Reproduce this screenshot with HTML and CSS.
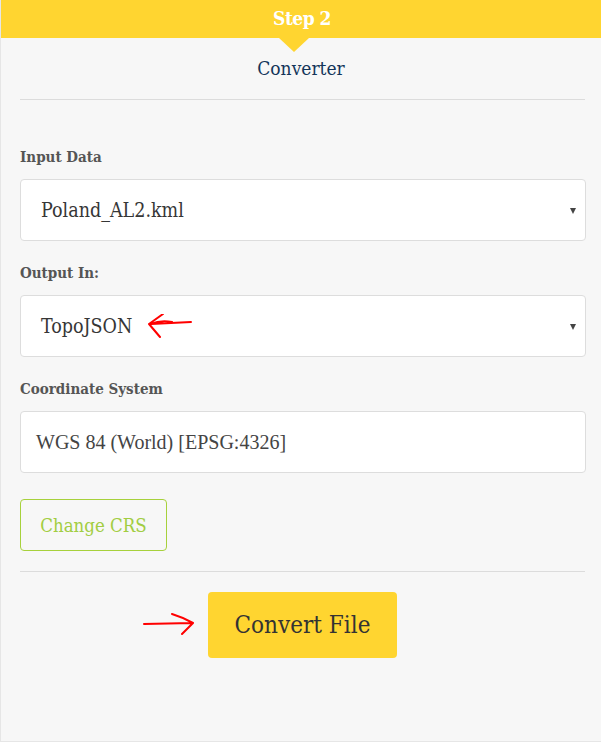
FILE: index.html
```html
<!DOCTYPE html>
<html>
<head>
<meta charset="utf-8">
<link rel="stylesheet" href="styles.css">
</head>
<body>
<div class="panel">
  <div class="bar"><span class="step">Step 2</span></div>
  <div class="title">Converter</div>
  <div class="rule"></div>
  <div class="form">
    <div class="label first">Input Data</div>
    <div class="select">
      <span class="value">Poland_AL2.kml</span>
      <span class="caret"></span>
    </div>
    <div class="label">Output In:</div>
    <div class="select">
      <span class="value">TopoJSON</span>
      <svg class="mark-left" width="50" height="30" viewBox="0 0 50 30">
        <path d="M45 8 L5 10 M17 0 L3 10 L14 23 M5 10 Q14 6 26 8" fill="none" stroke="#f00" stroke-width="2" stroke-linecap="round" stroke-linejoin="round"/>
      </svg>
      <span class="caret"></span>
    </div>
    <div class="label">Coordinate System</div>
    <div class="input">WGS 84 (World) [EPSG:4326]</div>
    <div class="crs-row"><button class="crs">Change CRS</button></div>
  </div>
  <div class="rule bottom"></div>
  <div class="convert-row">
    <svg class="mark-right" width="56" height="26" viewBox="0 0 56 26">
      <path d="M2 11 L50 10 M30 1 Q40 4 51 10 Q46 15 40 21" fill="none" stroke="#f00" stroke-width="2" stroke-linecap="round" stroke-linejoin="round"/>
    </svg>
    <button class="convert">Convert File</button>
  </div>
</div>
</body>
</html>
```
FILE: styles.css
```css
html, body {
  margin: 0;
  padding: 0;
  background: #ffffff;
}
.panel {
  width: 600px;
  height: 741px;
  background: #f7f7f7;
  border-left: 1px solid #e6e6e6;
  border-bottom: 1px solid #e6e6e6;
  font-family: "DejaVu Serif Condensed", "DejaVu Serif", serif;
}
.bar {
  position: relative;
  height: 38px;
  background: #ffd530;
  display: flex;
  justify-content: center;
  align-items: center;
}
.bar::after {
  content: "";
  position: absolute;
  left: 278px;
  top: 38px;
  width: 0;
  height: 0;
  border-left: 15px solid transparent;
  border-right: 15px solid transparent;
  border-top: 14px solid #ffd530;
}
.step {
  color: #ffffff;
  font-weight: bold;
  font-size: 19px;
  letter-spacing: -0.5px;
  margin-left: 2px;
  margin-top: -2px;
}
.title {
  margin-top: 18px;
  text-align: center;
  font-size: 19px;
  line-height: 24px;
  color: #13355a;
}
.rule {
  margin: 19px 16px 0 19px;
  height: 1px;
  background: #dcdcdc;
}
.form {
  padding: 0 15px 0 19px;
}
.label {
  margin-top: 22px;
  margin-bottom: 12px;
  height: 20px;
  line-height: 20px;
  font-size: 15px;
  font-weight: bold;
  color: #555555;
}
.label.first {
  margin-top: 47px;
}
.select, .input {
  position: relative;
  box-sizing: border-box;
  height: 62px;
  background: #ffffff;
  border: 1px solid #dddddd;
  border-radius: 4px;
  display: flex;
  align-items: center;
}
.select .value {
  padding-left: 20px;
  font-size: 19.5px;
  color: #363636;
}
.caret {
  position: absolute;
  right: 9px;
  top: 28px;
  width: 0;
  height: 0;
  border-left: 3.5px solid transparent;
  border-right: 3.5px solid transparent;
  border-top: 6px solid #444;
}
.mark-left {
  position: absolute;
  left: 125px;
  top: 18px;
}
.input {
  padding-left: 15px;
  font-family: "Liberation Serif", serif;
  font-size: 20px;
  color: #444;
}
.crs-row {
  margin-top: 26px;
  display: flex;
}
.crs {
  height: 52px;
  width: 147px;
  background: transparent;
  border: 1px solid #a7d13c;
  border-radius: 4px;
  color: #a2cd42;
  font-family: "DejaVu Serif Condensed", "DejaVu Serif", serif;
  font-size: 18.5px;
  padding: 0;
}
.rule.bottom {
  margin-top: 20px;
}
.convert-row {
  margin-top: 20px;
  display: flex;
  align-items: center;
  padding-left: 141px;
}
.mark-right {
  margin-right: 10px;
  margin-top: 2px;
}
.convert {
  height: 66px;
  width: 189px;
  background: #ffd530;
  border: none;
  border-radius: 4px;
  color: #333333;
  font-family: "DejaVu Serif Condensed", "DejaVu Serif", serif;
  font-size: 24px;
  padding: 0;
}
```
